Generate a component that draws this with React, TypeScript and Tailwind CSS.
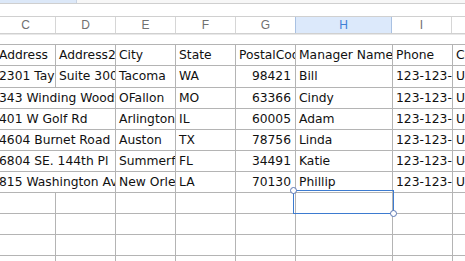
import React from 'react';

/**
 * Spreadsheet fragment — columns C..J, a store list with one selected empty cell.
 */

type Row = {
  c: string;
  d?: string; // when undefined the C text runs over the empty D cell
  e: string;
  f: string;
  g: string;
  h: string;
  i: string;
  j: string;
  tall?: boolean;
};

const rows: Row[] = [
  { c: 'Address', d: 'Address2', e: 'City', f: 'State', g: 'PostalCode', h: 'Manager Name', i: 'Phone', j: 'Country' },
  { c: '2301 Taylor Way', d: 'Suite 300', e: 'Tacoma', f: 'WA', g: '98421', h: 'Bill', i: '123-123-1234', j: 'USA', tall: true },
  { c: '343 Winding Woods', e: 'OFallon', f: 'MO', g: '63366', h: 'Cindy', i: '123-123-1234', j: 'USA' },
  { c: '401 W Golf Rd', e: 'Arlington', f: 'IL', g: '60005', h: 'Adam', i: '123-123-1234', j: 'USA' },
  { c: '4604 Burnet Road', e: 'Auston', f: 'TX', g: '78756', h: 'Linda', i: '123-123-1234', j: 'USA' },
  { c: '6804 SE. 144th Pl', e: 'Summerfield', f: 'FL', g: '34491', h: 'Katie', i: '123-123-1234', j: 'USA' },
  { c: '815 Washington Ave', e: 'New Orleans', f: 'LA', g: '70130', h: 'Phillip', i: '123-123-1234', j: 'USA' },
];

const EMPTY_ROWS = 4;
const cellBase =
  'shrink-0 h-full flex items-center px-[3px] overflow-hidden whitespace-nowrap border-r border-[#b4b4b4]';

function Cell({ w, right, children }: { w: string; right?: boolean; children?: React.ReactNode }) {
  return <div className={`${cellBase} ${w} ${right ? 'justify-end pr-[4px]' : ''}`}>{children}</div>;
}

export default function App() {
  return (
    <div className="w-[465px] h-[261px] overflow-hidden bg-white font-['DejaVu_Sans',sans-serif] text-[12.3px] text-[#111]">
      {/* tab strip remnant */}
      <div className="h-[4px] flex border-b border-[#cfcfcf]">
        <div className="w-[77px] bg-[#dce8f8] border-r border-[#c9d4e3]" />
        <div className="flex-1 bg-[#f7f7f7]" />
      </div>
      <div className="h-[12px]" />

      {/* column letters */}
      <div className="h-[18px] flex -ml-[4px] border-y border-[#d0d0d0] font-['Liberation_Sans',sans-serif] text-[12px] text-[#707070]">
        {[
          ['C', 'w-[60px]'],
          ['D', 'w-[60px]'],
          ['E', 'w-[60px]'],
          ['F', 'w-[60px]'],
          ['G', 'w-[60px]'],
        ].map(([l, w]) => (
          <div key={l} className={`${w} shrink-0 flex items-center justify-center border-r border-[#d6d6d6]`}>
            {l}
          </div>
        ))}
        <div className="w-[97px] shrink-0 flex items-center justify-center bg-[#dce9fb] border-x border-[#a9c1e2] -ml-px text-[#3f80d6]">
          H
        </div>
        <div className="w-[60px] shrink-0 flex items-center justify-center border-r border-[#d6d6d6]">I</div>
        <div className="flex-1" />
      </div>
      <div className="h-px bg-[#e8e8e8]" />
      <div className="h-[9px]" />

      {/* data grid */}
      <div className="-ml-[4px] border-t border-[#b4b4b4]">
        {rows.map((r, idx) => (
          <div
            key={idx}
            className={`flex border-b border-[#b4b4b4] ${r.tall ? 'h-[22px]' : 'h-[21px]'}`}
          >
            {r.d === undefined ? (
              <Cell w="w-[120px]">{r.c}</Cell>
            ) : (
              <>
                <Cell w="w-[60px]">{r.c}</Cell>
                <Cell w="w-[60px]">{r.d}</Cell>
              </>
            )}
            <Cell w="w-[60px]">{r.e}</Cell>
            <Cell w="w-[60px]">{r.f}</Cell>
            <Cell w="w-[60px]" right={idx > 0}>
              {r.g}
            </Cell>
            <Cell w="w-[97px]">{r.h}</Cell>
            <Cell w="w-[60px]">{r.i}</Cell>
            <div className="flex-1 flex items-center px-[3px] overflow-hidden whitespace-nowrap">{r.j}</div>
          </div>
        ))}

        {Array.from({ length: EMPTY_ROWS }).map((_, k) => (
          <div key={`e${k}`} className={`flex border-b border-[#b4b4b4] ${k === 3 ? 'h-[22px]' : 'h-[21px]'}`}>
            <Cell w="w-[60px]" />
            <Cell w="w-[60px]" />
            <Cell w="w-[60px]" />
            <Cell w="w-[60px]" />
            <Cell w="w-[60px]" />
            <div className={`${cellBase} w-[97px] relative overflow-visible`}>
              {k === 0 && (
                <div className="absolute -left-[3px] -top-[3px] -right-[2px] -bottom-[1px] border border-[#3d7bd0] z-10">
                  <span className="absolute -left-[4px] -top-[4px] w-[7px] h-[7px] rounded-full bg-white border border-[#5a77b4]" />
                  <span className="absolute -right-[4px] -bottom-[4px] w-[7px] h-[7px] rounded-full bg-white border border-[#5a77b4]" />
                </div>
              )}
            </div>
            <Cell w="w-[60px]" />
            <div className="flex-1" />
          </div>
        ))}
      </div>
    </div>
  );
}
